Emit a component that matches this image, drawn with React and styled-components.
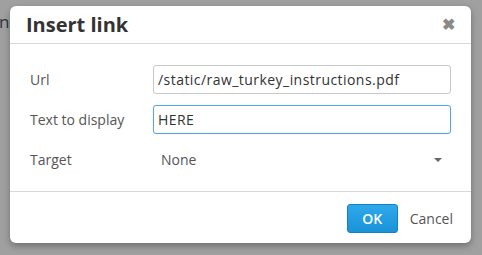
import React from "react";
import styled, { createGlobalStyle } from "styled-components";

const Global = createGlobalStyle`
  html, body { margin: 0; padding: 0; }
  body {
    background: #a0a0a0;
    font-family: "Open Sans", "Noto Sans", sans-serif;
    width: 482px;
    height: 255px;
    overflow: hidden;
  }
`;

const Page = styled.div`
  display: flex;
  align-items: flex-start;
  padding-top: 6px;
`;

const BehindText = styled.span`
  width: 10px;
  overflow: hidden;
  margin-top: 4px;
  font-size: 17px;
  line-height: 24px;
  color: #2d3540;
  text-indent: -1px;
`;

const Dialog = styled.div`
  width: 461px;
  height: 237px;
  background: #fff;
  border-radius: 6px;
  box-shadow: 0 3px 7px rgba(0, 0, 0, 0.3);
  display: flex;
  flex-direction: column;
  overflow: hidden;
`;

const Header = styled.div`
  height: 37px;
  border-bottom: 1px solid #d8d8d8;
  display: flex;
  align-items: center;
  justify-content: space-between;
  padding: 0 16px 0 16px;
`;

const Title = styled.h1`
  margin: 0;
  font-size: 20px;
  font-weight: 700;
  color: #333;
  line-height: 24px;
  margin-top: 1px;
`;

const Close = styled.span`
  font-size: 16px;
  font-weight: 700;
  color: #8a8a8a;
  line-height: 16px;
  margin-top: -1px;
`;

const Body = styled.div`
  height: 148px;
  border-bottom: 1px solid #d8d8d8;
  padding: 21px 20px 0 20px;
  box-sizing: border-box;
  display: flex;
  flex-direction: column;
  gap: 10px;
`;

const Row = styled.div`
  display: flex;
  align-items: center;
  height: 29px;
  margin-top: ${(p) => p.$shift || 0}px;
`;

const Label = styled.label`
  width: 123px;
  font-size: 14px;
  color: #555;
`;

const Input = styled.div`
  flex: 1;
  height: 29px;
  box-sizing: border-box;
  border: 1px solid ${(p) => (p.$focus ? "#5aa2e3" : "#c8c8c8")};
  border-radius: 3px;
  padding: 0 4px;
  display: flex;
  align-items: center;
  font-size: 14px;
  letter-spacing: 0.45px;
  color: #333;
  box-shadow: ${(p) => (p.$focus ? "0 0 1px rgba(90,162,227,0.4)" : "none")};
`;

const Select = styled.div`
  flex: 1;
  display: flex;
  align-items: center;
  justify-content: space-between;
  padding: 0 9px 0 8px;
  font-size: 14px;
  color: #555;
`;

const Caret = styled.span`
  width: 0;
  height: 0;
  border-left: 4px solid transparent;
  border-right: 4px solid transparent;
  border-top: 4px solid #666;
  margin-top: 1px;
`;

const Footer = styled.div`
  flex: 1;
  display: flex;
  align-items: center;
  justify-content: flex-end;
  gap: 12px;
  padding: 0 18px 0 0;
`;

const OkButton = styled.button`
  width: 51px;
  height: 29px;
  border: 1px solid #1680c2;
  border-radius: 3px;
  background: linear-gradient(#2ea9ea, #1a92d8);
  color: #fff;
  font-family: inherit;
  font-size: 14px;
  font-weight: 600;
  padding: 0;
  margin-top: 1px;
`;

const CancelButton = styled.button`
  border: none;
  background: none;
  padding: 0;
  font-family: inherit;
  font-size: 14px;
  color: #555;
  margin-top: 1px;
`;

export default function App() {
  return (
    <>
      <Global />
      <Page>
        <BehindText>n</BehindText>
        <Dialog>
          <Header>
            <Title>Insert link</Title>
            <Close>✖</Close>
          </Header>
          <Body>
            <Row>
              <Label>Url</Label>
              <Input>/static/raw_turkey_instructions.pdf</Input>
            </Row>
            <Row $shift={1}>
              <Label>Text to display</Label>
              <Input $focus>HERE</Input>
            </Row>
            <Row $shift={1}>
              <Label>Target</Label>
              <Select>
                <span>None</span>
                <Caret />
              </Select>
            </Row>
          </Body>
          <Footer>
            <OkButton>OK</OkButton>
            <CancelButton>Cancel</CancelButton>
          </Footer>
        </Dialog>
      </Page>
    </>
  );
}
